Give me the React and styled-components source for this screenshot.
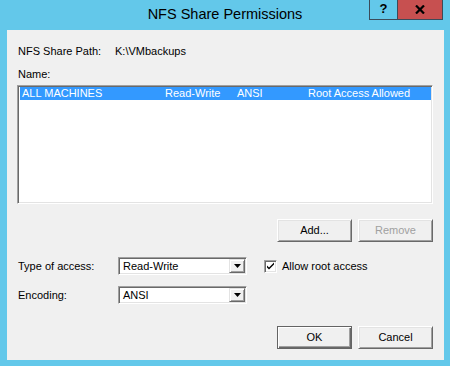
import React from 'react';
import styled, { createGlobalStyle } from 'styled-components';

const FRAME = '#63c8ea';

const GlobalStyle = createGlobalStyle`
  html, body {
    margin: 0;
    padding: 0;
    background: ${FRAME};
  }
  body {
    width: 450px;
    height: 366px;
    overflow: hidden;
    font-family: 'Liberation Sans', Arial, sans-serif;
  }
`;

const StyledWindow = styled.div`
  width: 450px;
  height: 366px;
  box-sizing: border-box;
  background: ${FRAME};
  padding: 0 6px 6px 7px;
  display: flex;
  flex-direction: column;
`;

const StyledTitleBar = styled.div`
  position: relative;
  height: 30px;
  flex: none;
  display: flex;
  align-items: center;
  justify-content: center;
  margin: 0 -6px 0 -7px;
`;

const StyledTitle = styled.div`
  font-size: 14.5px;
  color: #000;
  padding-bottom: 3px;
`;

const StyledCaptionButtons = styled.div`
  position: absolute;
  top: 0;
  right: 7px;
  display: flex;
  height: 20px;
  border: 1px solid #3b4b5a;
  border-top: none;
  box-sizing: border-box;
`;

const StyledCaptionButton = styled.div`
  width: ${props => props.width}px;
  background: ${props => (props.close ? '#c75050' : FRAME)};
  border-left: ${props => (props.close ? '1px solid #3b4b5a' : 'none')};
  display: flex;
  align-items: center;
  justify-content: center;
  box-sizing: border-box;
`;

const StyledHelpGlyph = styled.span`
  font-weight: 700;
  font-size: 13px;
  color: #000;
  margin-bottom: 2px;
`;

const StyledClient = styled.div`
  flex: 1;
  background: #f0f0f0;
  padding: 15px 11px 0 10px;
  display: flex;
  flex-direction: column;
  font-size: 11px;
  color: #000;
`;

const StyledInfoRow = styled.div`
  display: flex;
  line-height: 13px;
  height: 13px;
  margin-top: ${props => props.mt || 0}px;
`;

const StyledLabel = styled.div`
  width: ${props => props.width || 'auto'};
  flex: none;
  padding-left: 1px;
  box-sizing: border-box;
`;

const StyledList = styled.div`
  margin-top: 4px;
  height: 119px;
  background: #fff;
  box-sizing: border-box;
  border-style: solid;
  border-width: 1px;
  border-color: #a0a0a0 #fff #fff #a0a0a0;
  box-shadow: inset 1px 1px 0 #696969, inset -1px -1px 0 #e3e3e3;
  padding: 1px 1px 0 2px;
`;

const StyledListRow = styled.div`
  display: grid;
  grid-template-columns: 143px 72px 71px 1fr;
  height: 13px;
  line-height: 13px;
  padding-left: 2px;
  background: ${props => (props.selected ? '#3399ff' : 'transparent')};
  color: ${props => (props.selected ? '#fff' : '#000')};
  white-space: nowrap;
`;

const StyledButtonRow = styled.div`
  display: flex;
  justify-content: flex-end;
  gap: 6px;
  margin-top: ${props => props.mt}px;
`;

const StyledButton = styled.div`
  width: 75px;
  height: 23px;
  box-sizing: border-box;
  display: flex;
  align-items: center;
  justify-content: center;
  background: #f0f0f0;
  font-size: 11px;
  color: ${props => (props.disabled ? '#a0a0a0' : '#000')};
  border-style: solid;
  border-width: 1px;
  border-color: ${props => (props.primary ? '#646464' : '#fff #696969 #696969 #fff')};
  box-shadow: ${props =>
    props.primary
      ? 'inset 1px 1px 0 #fff, inset -1px -1px 0 #696969, inset -2px -2px 0 #a0a0a0'
      : 'inset 1px 1px 0 #e3e3e3, inset -1px -1px 0 #a0a0a0'};
  padding-bottom: 1px;
`;

const StyledFormRow = styled.div`
  display: flex;
  align-items: center;
  height: 18px;
  margin-top: ${props => props.mt}px;
`;

const StyledSelect = styled.div`
  width: 129px;
  height: 18px;
  box-sizing: border-box;
  background: #fff;
  display: flex;
  border-style: solid;
  border-width: 1px;
  border-color: #a0a0a0 #fff #fff #a0a0a0;
  box-shadow: inset 1px 1px 0 #696969, inset -1px -1px 0 #e3e3e3;
  padding: 1px;
`;

const StyledSelectValue = styled.div`
  flex: 1;
  padding-left: 3px;
  line-height: 14px;
`;

const StyledSelectArrow = styled.div`
  width: 16px;
  flex: none;
  background: #f0f0f0;
  box-sizing: border-box;
  border-style: solid;
  border-width: 1px;
  border-color: #e3e3e3 #696969 #696969 #e3e3e3;
  box-shadow: inset 1px 1px 0 #fff, inset -1px -1px 0 #a0a0a0;
  display: flex;
  align-items: center;
  justify-content: center;
`;

const StyledCheckWrap = styled.div`
  display: flex;
  align-items: center;
  margin-left: 17px;
  gap: 5px;
`;

const StyledCheckBox = styled.div`
  width: 13px;
  height: 13px;
  box-sizing: border-box;
  background: #fff;
  border-style: solid;
  border-width: 1px;
  border-color: #a0a0a0 #fff #fff #a0a0a0;
  box-shadow: inset 1px 1px 0 #696969, inset -1px -1px 0 #e3e3e3;
  display: flex;
  align-items: center;
  justify-content: center;
`;

const Arrow = () => (
  <svg width="7" height="4" viewBox="0 0 7 4">
    <path d="M0 0h7L3.5 4z" fill="#000" />
  </svg>
);

const Check = () => (
  <svg width="9" height="9" viewBox="0 0 9 9">
    <path d="M1 3.5l2 2 5-5v2l-5 5-2-2z" fill="#000" />
  </svg>
);

const CloseGlyph = () => (
  <svg width="10" height="9" viewBox="0 0 10 9">
    <path d="M1 0.5l8 8M9 0.5l-8 8" stroke="#000" strokeWidth="2.2" />
  </svg>
);

const Select = ({ value }) => (
  <StyledSelect>
    <StyledSelectValue>{value}</StyledSelectValue>
    <StyledSelectArrow>
      <Arrow />
    </StyledSelectArrow>
  </StyledSelect>
);

const App = () => (
  <StyledWindow>
    <GlobalStyle />
    <StyledTitleBar>
      <StyledTitle>NFS Share Permissions</StyledTitle>
      <StyledCaptionButtons>
        <StyledCaptionButton width={27}>
          <StyledHelpGlyph>?</StyledHelpGlyph>
        </StyledCaptionButton>
        <StyledCaptionButton width={45} close>
          <CloseGlyph />
        </StyledCaptionButton>
      </StyledCaptionButtons>
    </StyledTitleBar>

    <StyledClient>
      <StyledInfoRow>
        <StyledLabel width="98px">NFS Share Path:</StyledLabel>
        <div>K:\VMbackups</div>
      </StyledInfoRow>
      <StyledInfoRow mt={10}>
        <StyledLabel>Name:</StyledLabel>
      </StyledInfoRow>

      <StyledList>
        <StyledListRow selected>
          <div>ALL MACHINES</div>
          <div>Read-Write</div>
          <div>ANSI</div>
          <div>Root Access Allowed</div>
        </StyledListRow>
      </StyledList>

      <StyledButtonRow mt={15}>
        <StyledButton>Add...</StyledButton>
        <StyledButton disabled>Remove</StyledButton>
      </StyledButtonRow>

      <StyledFormRow mt={15}>
        <StyledLabel width="101px">Type of access:</StyledLabel>
        <Select value="Read-Write" />
        <StyledCheckWrap>
          <StyledCheckBox>
            <Check />
          </StyledCheckBox>
          <span>Allow root access</span>
        </StyledCheckWrap>
      </StyledFormRow>

      <StyledFormRow mt={11}>
        <StyledLabel width="101px">Encoding:</StyledLabel>
        <Select value="ANSI" />
      </StyledFormRow>

      <StyledButtonRow mt={22}>
        <StyledButton primary>OK</StyledButton>
        <StyledButton>Cancel</StyledButton>
      </StyledButtonRow>
    </StyledClient>
  </StyledWindow>
);

export default App;
